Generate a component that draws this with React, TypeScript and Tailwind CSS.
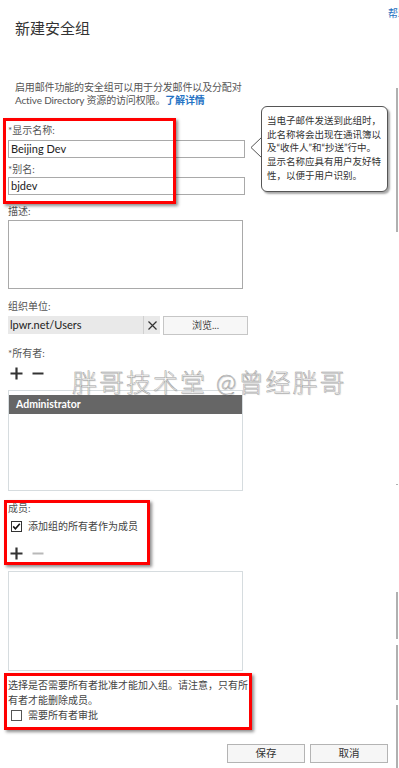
const FONT = "font-['Lato','Noto_Sans_CJK_SC',sans-serif]";

function Label({ text, className = "" }: { text: string; className?: string }) {
  return <div className={`text-[10px] leading-[14px] text-[#555] ${className}`}>{text}</div>;
}

function PlusMinus({ minusMuted = false }: { minusMuted?: boolean }) {
  return (
    <div className="flex h-[16px] items-center gap-[9px] pl-[2px]">
      <svg width="13" height="13" viewBox="0 0 13 13">
        <path d="M6.5 0.5v12M0.5 6.5h12" stroke="#333" strokeWidth="2.2" />
      </svg>
      <svg width="12" height="13" viewBox="0 0 12 13">
        <path d="M0.5 6.5h11" stroke={minusMuted ? "#b9b9b9" : "#333"} strokeWidth="2" />
      </svg>
    </div>
  );
}

function CheckBox({ checked, label }: { checked: boolean; label: string }) {
  return (
    <div className="flex h-[14px] items-center gap-[6px] pl-[3px]">
      <svg width="11" height="11" viewBox="0 0 11 11">
        <rect x="0.5" y="0.5" width="10" height="10" fill="#fff" stroke={checked ? "#333" : "#555"} />
        {checked && <path d="M2.2 5.4l2.2 2.3 4.4-5" fill="none" stroke="#111" strokeWidth="1.6" />}
      </svg>
      <span className="text-[10px] leading-[14px] text-[#444]">{label}</span>
    </div>
  );
}

function RedBox({ className }: { className: string }) {
  return (
    <div
      className={`pointer-events-none absolute border-[3px] border-[#f00] shadow-[2px_2px_3px_rgba(0,0,0,0.45)] ${className}`}
    />
  );
}

export default function App() {
  return (
    <div className={`relative h-[768px] w-[399px] overflow-hidden bg-white ${FONT}`}>
      <div className="absolute left-[388px] top-[6px] whitespace-nowrap text-[10px] leading-[14px] text-[#1f6fc0]">
        帮助
      </div>

      <div className="flex flex-col px-[8px]">
        <div className="ml-[7px] mt-[17px] text-[15px] leading-[22px] text-[#333]">新建安全组</div>

        <div className="ml-[7px] mt-[42px] text-[10px] leading-[13px] tracking-[-0.15px] text-[#555]">
          启用邮件功能的安全组可以用于分发邮件以及分配对
          <br />
          Active Directory 资源的访问权限。
          <span className="font-bold text-[#2673c4]">了解详情</span>
        </div>

        <Label text="*显示名称:" className="mt-[16px]" />
        <div className="mt-[3px] flex h-[18px] w-[237px] items-center border border-[#a9a9a9] pl-[2px] text-[11px] text-[#222]">
          Beijing Dev
        </div>

        <Label text="*别名:" className="mt-[4px]" />
        <div className="mt-[1px] flex h-[18px] w-[237px] items-center border border-[#a9a9a9] pl-[2px] text-[11px] text-[#222]">
          bjdev
        </div>

        <Label text="描述:" className="mt-[9px]" />
        <div className="mt-[2px] h-[69px] w-[235px] border border-[#a9a9a9]" />

        <Label text="组织单位:" className="mt-[10px]" />
        <div className="mt-[3px] flex h-[18px] items-center">
          <div className="flex h-full w-[152px] items-center bg-[#e9e9e9]">
            <span className="flex-1 pl-[2px] text-[11px] text-[#222]">lpwr.net/Users</span>
            <span className="flex h-full w-[17px] items-center justify-center border-l border-[#d0d0d0]">
              <svg width="9" height="9" viewBox="0 0 9 9">
                <path d="M0.5 0.5l8 8M8.5 0.5l-8 8" stroke="#333" strokeWidth="1.2" />
              </svg>
            </span>
          </div>
          <div className="ml-[3px] flex h-[19px] w-[85px] items-center justify-center border border-[#c6c6c6] bg-[#f7f7f7] text-[10px] text-[#444]">
            浏览...
          </div>
        </div>

        <Label text="*所有者:" className="mt-[12px]" />
        <div className="mt-[5px]">
          <PlusMinus />
        </div>
        <div className="mt-[9px] h-[101px] w-[235px] border border-[#d6dcdf] pt-[4px]">
          <div className="flex h-[19px] items-center bg-[#666] pl-[7px] text-[10.5px] font-bold text-white">
            Administrator
          </div>
        </div>

        <Label text="成员:" className="mt-[10px]" />
        <div className="mt-[4px]">
          <CheckBox checked label="添加组的所有者作为成员" />
        </div>
        <div className="mt-[12px]">
          <PlusMinus minusMuted />
        </div>
        <div className="mt-[10px] h-[100px] w-[235px] border border-[#d6dcdf]" />

        <div className="mt-[7px] text-[10px] leading-[15px] text-[#444]">
          选择是否需要所有者批准才能加入组。请注意，只有所
          <br />
          有者才能删除成员。
        </div>
        <CheckBox checked={false} label="需要所有者审批" />

        <div className="mt-[22px] flex justify-end gap-[5px] pr-[3px]">
          <div className="flex h-[19px] w-[78px] items-center justify-center border border-[#b4b4b4] bg-[#f6f6f6] text-[10.5px] text-[#333]">
            保存
          </div>
          <div className="flex h-[19px] w-[78px] items-center justify-center border border-[#b4b4b4] bg-[#f6f6f6] text-[10.5px] text-[#333]">
            取消
          </div>
        </div>
      </div>

      {/* tooltip beside the display name field */}
      <div className="absolute left-[250px] top-[106px] flex">
        <svg width="12" height="86" viewBox="0 0 12 86" className="-mr-px">
          <path d="M12 31L1 41.5L12 52" fill="#fff" stroke="#555" strokeWidth="1" />
        </svg>
        <div className="h-[86px] w-[127px] rounded-[6px] border border-[#555] bg-white pl-[5px] pt-[7px] text-[9.5px] leading-[13.7px] text-[#333] shadow-[2px_2px_2px_rgba(0,0,0,0.35)]">
          当电子邮件发送到此组时，
          <br />
          此名称将会出现在通讯簿以
          <br />
          及“收件人”和“抄送”行中。
          <br />
          显示名称应具有用户友好特
          <br />
          性，以便于用户识别。
        </div>
      </div>

      {/* watermark */}
      <div className="pointer-events-none absolute left-[72px] top-[367px] whitespace-nowrap text-[25px] font-light leading-[30px] tracking-[2px] text-white [-webkit-text-stroke:0.5px_#999] [text-shadow:1px_1px_1px_rgba(0,0,0,0.15)]">
        胖哥技术堂 @曾经胖哥
      </div>

      {/* scrollbar remnants at the right edge */}
      <div className="absolute left-[396px] top-[88px] h-[144px] w-[2px] bg-[#b0b0b0]" />
      <div className="absolute left-[396px] top-[484px] h-[1px] w-[2px] bg-[#b0b0b0]" />
      <div className="absolute left-[396px] top-[592px] h-[47px] w-[2px] bg-[#b0b0b0]" />
      <div className="absolute left-[396px] top-[645px] h-[55px] w-[2px] bg-[#b0b0b0]" />
      <div className="absolute left-[396px] top-[705px] h-[63px] w-[2px] bg-[#b0b0b0]" />

      <RedBox className="left-[3px] top-[118px] h-[86px] w-[173px]" />
      <RedBox className="left-[4px] top-[500px] h-[65px] w-[146px]" />
      <RedBox className="left-[4px] top-[673px] h-[57px] w-[248px]" />
    </div>
  );
}
